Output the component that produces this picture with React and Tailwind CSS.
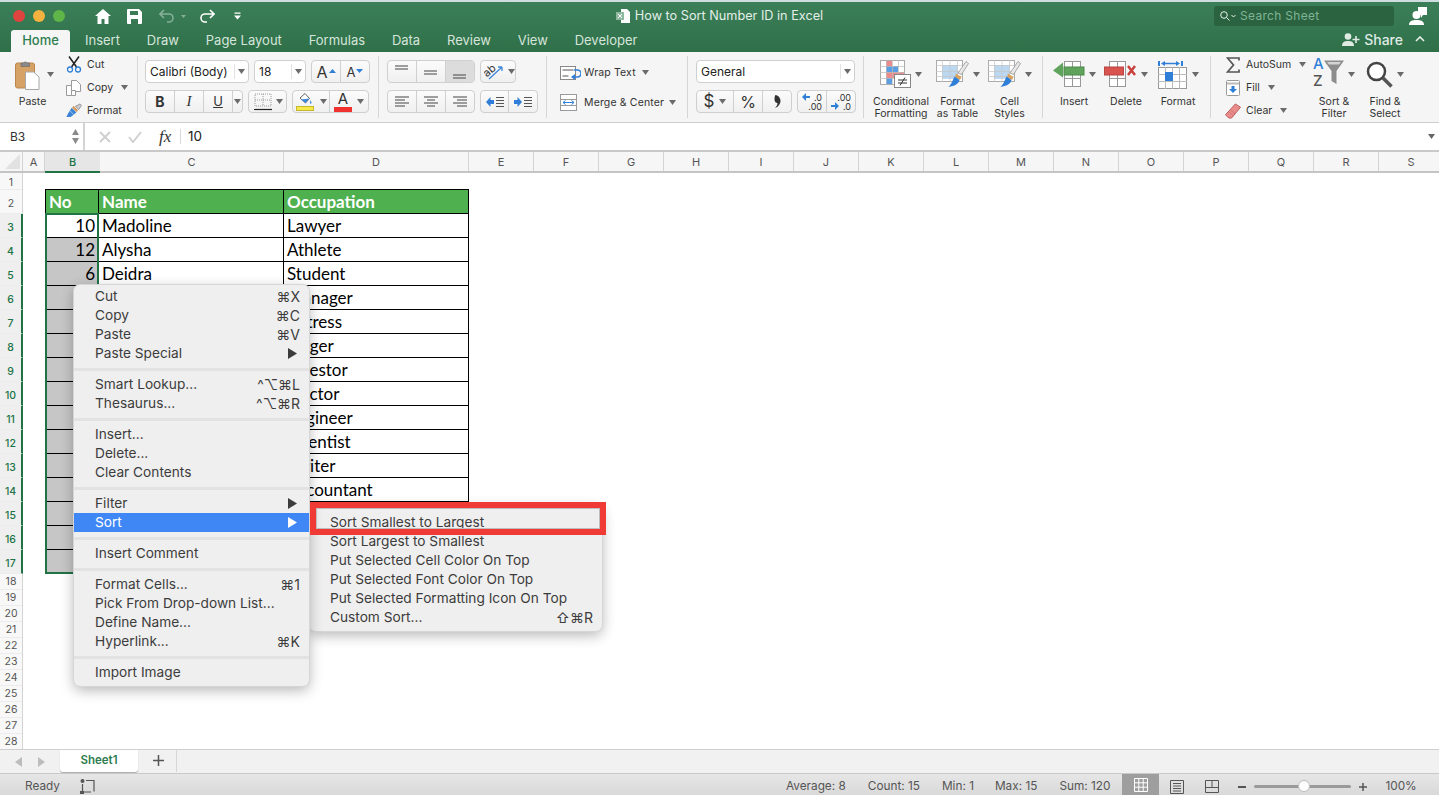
// Excel for Mac window with the cell context menu open on the Sort submenu.

const uiFont = "font-['Inter','DejaVu_Sans',sans-serif]";
const cellFont = "font-['Lato',sans-serif]";

const tabs = ["Insert", "Draw", "Page Layout", "Formulas", "Data", "Review", "View", "Developer"];

const otherColumns = ["E", "F", "G", "H", "I", "J", "K", "L", "M", "N", "O", "P", "Q", "R", "S"];

const rows = [
  ["10", "Madoline", "Lawyer"],
  ["12", "Alysha", "Athlete"],
  ["6", "Deidra", "Student"],
  ["", "", "Manager"],
  ["", "", "Actress"],
  ["", "", "Singer"],
  ["", "", "Investor"],
  ["", "", "Doctor"],
  ["", "", "Engineer"],
  ["", "", "Scientist"],
  ["", "", "Writer"],
  ["", "", "Accountant"],
  ["", "", ""],
  ["", "", ""],
  ["", "", ""],
];

const menuGroups = [
  [
    { label: "Cut", keys: "⌘X" },
    { label: "Copy", keys: "⌘C" },
    { label: "Paste", keys: "⌘V" },
    { label: "Paste Special", arrow: true },
  ],
  [
    { label: "Smart Lookup...", keys: "^⌥⌘L" },
    { label: "Thesaurus...", keys: "^⌥⌘R" },
  ],
  [{ label: "Insert..." }, { label: "Delete..." }, { label: "Clear Contents" }],
  [{ label: "Filter", arrow: true }, { label: "Sort", arrow: true, active: true }],
  [{ label: "Insert Comment" }],
  [
    { label: "Format Cells...", keys: "⌘1" },
    { label: "Pick From Drop-down List..." },
    { label: "Define Name..." },
    { label: "Hyperlink...", keys: "⌘K" },
  ],
  [{ label: "Import Image" }],
];

const sortItems = [
  { label: "Sort Smallest to Largest" },
  { label: "Sort Largest to Smallest" },
  { label: "Put Selected Cell Color On Top" },
  { label: "Put Selected Font Color On Top" },
  { label: "Put Selected Formatting Icon On Top" },
  { label: "Custom Sort...", keys: "⇧⌘R" },
];

function Caret({ className = "" }) {
  return (
    <svg width="7" height="5" viewBox="0 0 7 5" className={`shrink-0 ${className}`}>
      <path d="M0 0h7L3.500 5z" fill="#6b6b6b" />
    </svg>
  );
}

function Lines({ lines, width = 16, height = 14 }) {
  return (
    <svg width={width} height={height} viewBox={`0 0 ${width} ${height}`}>
      {lines.map(([x1, x2, y]) => (
        <path key={`${x1}-${y}`} d={`M${x1} ${y}H${x2}`} stroke="#444" strokeWidth="1" />
      ))}
    </svg>
  );
}

function PasteIcon() {
  return (
    <svg width="25" height="31" viewBox="0 0 25 31">
      <rect x="0.500" y="4" width="19" height="25" rx="2" fill="#d7a266" stroke="#b9874e" />
      <path d="M6 4h2.500a2 2 0 0 1 3.500 0H14.500v3.500H6z" fill="#8a8a8a" stroke="#666" strokeWidth="0.6" />
      <path d="M10.500 13h8l5.500 5v12.500H10.500z" fill="#fff" stroke="#a8a8a8" />
    </svg>
  );
}

function ScissorsIcon() {
  return (
    <svg width="16" height="17" viewBox="0 0 16 17">
      <path d="M3 0.500 10.500 11M13 0.500 5.500 11" stroke="#222" strokeWidth="1.500" fill="none" />
      <circle cx="4" cy="13.500" r="2.500" fill="none" stroke="#2f7fd8" strokeWidth="1.300" />
      <circle cx="12" cy="13.500" r="2.500" fill="none" stroke="#2f7fd8" strokeWidth="1.300" />
    </svg>
  );
}

function CopyIcon() {
  return (
    <svg width="16" height="16" viewBox="0 0 16 16" fill="#fff" stroke="#9a9a9a">
      <path d="M5.500 0.500h5l4 4v7h-9z" />
      <path d="M0.500 5.500h5v10h-5z" />
      <path d="M5.500 10.500h4v5h-4z" />
    </svg>
  );
}

function BrushIcon() {
  return (
    <svg width="17" height="15" viewBox="0 0 17 15">
      <path d="M10 3 15 0.500l1.500 1.500-3 4.500z" fill="#c9ccd2" stroke="#777" strokeWidth="0.700" />
      <path d="M8 2.500 13 7.500l-2 1.500-4.500-4.500z" fill="#d49a5a" />
      <path d="M6 4.500 11 9.500 5 14.500H0.500L2 11z" fill="#3d84d6" />
      <path d="M4 7.500 8 11.500" stroke="#a9cdf2" />
    </svg>
  );
}

function BorderIcon() {
  return (
    <svg width="18" height="18" viewBox="0 0 18 18">
      <path d="M1 1h16v12H1zM9 1v12M1 7h16" fill="none" stroke="#9a9a9a" strokeDasharray="1 1" />
      <path d="M0 16.500h18" stroke="#222" strokeWidth="1.200" />
    </svg>
  );
}

function FillIcon() {
  return (
    <svg width="18" height="19" viewBox="0 0 18 19">
      <path d="M4 6 9 1.500l4.500 5-4 4.500z" fill="#fff" stroke="#666" />
      <path d="M5 7.500 9.500 11l4-4.500z" fill="#3f87d8" />
      <path d="M14 8c1 1.500 1.500 2 1.500 3s-1.500 1-1.500 0z" fill="#3f87d8" />
      <rect x="0.500" y="14.500" width="17" height="4" fill="#f5ea4a" stroke="#c4b92e" />
    </svg>
  );
}

function FontColorIcon() {
  return (
    <div className="flex flex-col items-center">
      <span className="text-[15px] leading-[15px] text-[#333]">A</span>
      <span className="mt-[1px] h-[5px] w-[18px] bg-[#f0312d]" />
    </div>
  );
}

function OrientationIcon() {
  return (
    <svg width="21" height="19" viewBox="0 0 21 19">
      <text x="0" y="12" fontSize="11" fill="#333" fontFamily="Inter, sans-serif" transform="rotate(-40 6 10)">
        ab
      </text>
      <path d="M5 17 18 5M18 5h-4M18 5v4" stroke="#3f87d8" strokeWidth="1.300" fill="none" />
    </svg>
  );
}

function IndentIcon({ flip = false }) {
  return (
    <svg width="18" height="12" viewBox="0 0 18 12">
      <path d={flip ? "M0 4h3.500V1L8 6l-4.500 5V8H0z" : "M8 4H4.500V1L0 6l4.500 5V8H8z"} fill="#2f7fd8" />
      <path d="M10 1.500h8M10 4.500h8M10 7.500h8M10 10.500h8" stroke="#555" />
    </svg>
  );
}

function WrapIcon() {
  return (
    <svg width="21" height="14" viewBox="0 0 21 14">
      <rect x="0.500" y="0.500" width="15" height="13" fill="#fff" stroke="#888" />
      <path d="M2.500 4h11M2.500 10h6" stroke="#555" />
      <path d="M14 4h3.500a2.500 2.500 0 0 1 0 7H14" fill="none" stroke="#2f7fd8" strokeWidth="1.500" />
      <path d="M15 8v6l-4-3z" fill="#2f7fd8" />
    </svg>
  );
}

function MergeIcon() {
  return (
    <svg width="17" height="17" viewBox="0 0 17 17">
      <rect x="0.500" y="0.500" width="16" height="16" fill="#fff" stroke="#9a9a9a" />
      <path d="M0.500 5.500h16M0.500 11.500h16" stroke="#9a9a9a" />
      <path d="M3 8.500h11M3 8.500l2.500-2M3 8.500l2.500 2M14 8.500l-2.500-2M14 8.500l-2.500 2" stroke="#2f7fd8" fill="none" />
    </svg>
  );
}

function CommaIcon() {
  return (
    <svg width="7" height="13" viewBox="0 0 7 13">
      <path d="M1.500 0c3 .5 5 3 5 6 0 3-2.500 6-5.500 7 1.500-1.500 2.500-3 2.500-5C2 8 .5 7 .5 4.500.5 2 1 .5 1.500 0z" fill="#333" />
    </svg>
  );
}

function DecimalIcon({ more = false }) {
  return (
    <div className={`relative h-[18px] w-[20px] text-[9px] leading-[9px] text-[#333] ${uiFont}`}>
      <span className={`absolute right-0 ${more ? "top-[9px]" : "top-0"}`}>.0</span>
      <span className={`absolute right-0 ${more ? "top-0" : "top-[9px]"}`}>.00</span>
      <svg
        width="8"
        height="8"
        viewBox="0 0 8 8"
        className={`absolute left-0 ${more ? "top-[9px]" : "top-0"}`}
      >
        <path d={more ? "M0 3h4V0l4 4-4 4V5H0z" : "M8 3H4V0L0 4l4 4V5h4z"} fill="#2f7fd8" />
      </svg>
    </div>
  );
}

function ConditionalIcon() {
  return (
    <svg width="31" height="28" viewBox="0 0 31 28">
      <rect x="0.500" y="0.500" width="24" height="24" fill="#fff" stroke="#aaa" />
      <rect x="6" y="1" width="6" height="5" fill="#ec8b8b" />
      <rect x="6" y="6" width="12" height="6" fill="#5b9fe3" />
      <rect x="6" y="12" width="18" height="6" fill="#ec8b8b" />
      <rect x="6" y="18" width="6" height="6" fill="#5b9fe3" />
      <path d="M6.500 0v25M12.500 0v25M18.500 0v25M0 6.500h25M0 12.500h25M0 18.500h25" stroke="#bbb" strokeWidth="0.700" />
      <rect x="14.500" y="14.500" width="16" height="13" fill="#fff" stroke="#888" />
      <path d="M18 20h9M18 23h9M25 17.500 20 25.500" stroke="#333" fill="none" />
    </svg>
  );
}

function TableBrushIcon() {
  return (
    <svg width="33" height="28" viewBox="0 0 33 28">
      <rect x="0.500" y="0.500" width="26" height="21" fill="#fff" stroke="#aaa" />
      <rect x="6" y="5" width="16" height="14" fill="#bcd8f1" />
      <path d="M6.500 0v22M14 0v22M21.500 0v22M0 5.500h27M0 11.500h27M0 16.500h27" stroke="#c4c4c4" strokeWidth="0.700" />
      <path d="M22 13 30 1.500l2.500 2-7 11z" fill="#e8e8e8" stroke="#888" strokeWidth="0.700" />
      <path d="M20 13.500 25.500 17 24 20l-5-3z" fill="#d9a25f" />
      <path d="M18.500 16.500 23.500 20c-1 4-5 6-11 7 3-3 4-6 6-10.500z" fill="#2f7fd8" />
    </svg>
  );
}

function InsertCellsIcon() {
  return (
    <svg width="32" height="26" viewBox="0 0 32 26">
      <rect x="11.500" y="0.500" width="16" height="25" fill="#fff" stroke="#999" />
      <path d="M19.500 0v26M11 17.500h17" stroke="#999" />
      <rect x="11" y="6" width="20" height="8" fill="#5fa35d" stroke="#4a8a49" />
      <path d="M10 1.500v15L0 9.500z" fill="#5fa35d" />
    </svg>
  );
}

function DeleteCellsIcon() {
  return (
    <svg width="33" height="26" viewBox="0 0 33 26">
      <rect x="5.500" y="0.500" width="16" height="25" fill="#fff" stroke="#999" />
      <path d="M13.500 0v26M5 17.500h17" stroke="#999" />
      <rect x="0.500" y="6" width="19" height="8" fill="#d9534f" stroke="#b94440" />
      <path d="M24 5l7 9M31 5l-7 9" stroke="#c9403c" strokeWidth="2.500" />
    </svg>
  );
}

function FormatCellsIcon() {
  return (
    <svg width="30" height="29" viewBox="0 0 30 29">
      <path d="M1 1v5M24 1v5" stroke="#2f7fd8" strokeWidth="2" />
      <path d="M5 3.500h15" stroke="#2f7fd8" strokeWidth="1.500" />
      <path d="M3 3.500l4-2.500v5zM22 3.500l-4-2.500v5z" fill="#2f7fd8" />
      <rect x="0.500" y="7.500" width="28" height="21" fill="#fff" stroke="#999" />
      <path d="M7.500 7v22M14.500 7v22M21.500 7v22M0 14.500h29M0 21.500h29" stroke="#bbb" />
      <rect x="7" y="12" width="8" height="9" fill="#2f7fd8" />
    </svg>
  );
}

function SigmaIcon() {
  return (
    <svg width="14" height="16" viewBox="0 0 14 16">
      <path d="M13 3.500V1H1.500L7.500 8l-6 7H13v-2.500" fill="none" stroke="#555" strokeWidth="1.700" />
    </svg>
  );
}

function FillDownIcon() {
  return (
    <svg width="14" height="16" viewBox="0 0 14 16">
      <rect x="0.500" y="0.500" width="13" height="15" rx="1" fill="#fff" stroke="#999" />
      <path d="M1 3.500h12" stroke="#bbb" strokeWidth="2" />
      <path d="M5.500 6h3v3h2.500L7 13 3 9h2.500z" fill="#2f7fd8" />
    </svg>
  );
}

function EraserIcon() {
  return (
    <svg width="17" height="16" viewBox="0 0 17 16">
      <path d="M11 0.500 16.500 4 7 15.500H4L0.500 12z" fill="#ea8c8c" stroke="#b85b5b" />
      <path d="M4 9 9 13M6 7l5 4" stroke="#c76c6c" strokeWidth="0.700" />
    </svg>
  );
}

function SortFilterIcon() {
  return (
    <div className={`relative h-[32px] w-[31px] ${uiFont}`}>
      <span className="absolute left-0 top-[-2px] text-[15px] font-medium leading-[16px] text-[#2f7fd8]">A</span>
      <span className="absolute left-0 top-[15px] text-[15px] font-medium leading-[16px] text-[#555]">Z</span>
      <svg width="20" height="26" viewBox="0 0 20 26" className="absolute left-[11px] top-[2px]">
        <path d="M0 0.500h20L12.500 11v13L7.500 21V11z" fill="#8c8c8c" />
        <path d="M3 2h14l-2 2.500H5z" fill="#d4d4d4" />
      </svg>
    </div>
  );
}

function SearchIcon() {
  return (
    <svg width="27" height="27" viewBox="0 0 27 27">
      <circle cx="10.500" cy="10.500" r="8.500" fill="#fff" stroke="#444" strokeWidth="2.500" />
      <path d="M17 17 25.500 25.500" stroke="#555" strokeWidth="3.500" />
    </svg>
  );
}

function Segments({ widths, children, className = "" }) {
  return (
    <div
      className={`flex h-[23px] shrink-0 divide-x divide-[#d0d0d0] overflow-hidden rounded-[4px] border border-[#cfcfcf] bg-gradient-to-b from-[#fbfbfb] to-[#f0f0f0] ${className}`}
    >
      {children.map((child, index) => (
        <div key={index} style={{ width: widths[index] }} className="flex items-center justify-center">
          {child}
        </div>
      ))}
    </div>
  );
}

function Combo({ label, className = "" }) {
  return (
    <div
      className={`flex h-[23px] shrink-0 items-center rounded-[4px] border border-[#cfcfcf] bg-white pl-[4px] text-[12px] text-[#222] ${className}`}
    >
      <span className="flex-1">{label}</span>
      <span className="flex h-[15px] w-[14px] items-center justify-center border-l border-[#e2e2e2]">
        <Caret />
      </span>
    </div>
  );
}

function BigButton({ icon, lines, width, caretClass = "" }) {
  return (
    <div style={{ width }} className="flex shrink-0 flex-col items-center">
      <div className="flex h-[44px] items-center gap-[4px]">
        {icon}
        <Caret className={caretClass} />
      </div>
      <div className="text-center text-[10.500px] leading-[12px] text-[#333]">
        {lines.map((line) => (
          <div key={line}>{line}</div>
        ))}
      </div>
    </div>
  );
}

function SmallButton({ icon, label, caret = true, iconWidth = 16 }) {
  return (
    <div className="flex h-[23px] items-center text-[10.500px] text-[#333]">
      <span style={{ width: iconWidth }} className="flex shrink-0 justify-center">
        {icon}
      </span>
      <span className="ml-[5px]">{label}</span>
      {caret ? <Caret className="ml-[8px]" /> : null}
    </div>
  );
}

function Divider() {
  return <div className="my-[4px] w-px shrink-0 bg-[#d6d6d6]" />;
}

function TitleBar() {
  return (
    <div className="h-[52px] shrink-0 border-t-[2px] border-[#cfdde0] bg-gradient-to-b from-[#3b7f58] to-[#2f7049] text-white">
      <div className="grid h-[28px] grid-cols-[1fr_auto_1fr] items-center">
        <div className="flex items-center pl-[13px]">
          <span className="h-[12px] w-[12px] rounded-full bg-[#e0443e]" />
          <span className="ml-[8px] h-[12px] w-[12px] rounded-full bg-[#f5b23e]" />
          <span className="ml-[8px] h-[12px] w-[12px] rounded-full bg-[#5fb548]" />
          <svg width="16" height="15" viewBox="0 0 16 15" className="ml-[30px]">
            <path d="M8 0 0 7h2.500v8h4v-5h3v5h4V7H16z" fill="#fff" />
          </svg>
          <svg width="15" height="15" viewBox="0 0 15 15" className="ml-[16px]">
            <path d="M1 0h11l3 3v11a1 1 0 0 1-1 1H1a1 1 0 0 1-1-1V1a1 1 0 0 1 1-1zm2 2v4h8V2zm1 8v5h7v-5z" fill="#fff" fillRule="evenodd" />
          </svg>
          <svg width="16" height="14" viewBox="0 0 16 14" className="ml-[17px] opacity-40">
            <path d="M5 1 1 5l4 4M1 5h9a4 4 0 0 1 0 8H8" fill="none" stroke="#fff" strokeWidth="1.600" />
          </svg>
          <svg width="5" height="3" viewBox="0 0 5 3" className="ml-[6px] opacity-40">
            <path d="M0 0h5L2.500 3z" fill="#fff" />
          </svg>
          <svg width="16" height="14" viewBox="0 0 16 14" className="ml-[13px]">
            <path d="M11 1l4 4-4 4M15 5H6a4 4 0 0 0 0 8h2" fill="none" stroke="#fff" strokeWidth="1.600" />
          </svg>
          <svg width="7" height="8" viewBox="0 0 7 8" className="ml-[19px]">
            <path d="M0.500 0.500h6v1.200h-6zM0 3.500h7L3.500 7.500z" fill="#fff" />
          </svg>
        </div>
        <div className="flex items-center gap-[5px] text-[12.700px] text-[#e4eee8]">
          <svg width="14" height="14" viewBox="0 0 14 14">
            <path d="M5 0h6l3 3v11H5z" fill="#fff" />
            <rect x="0" y="3" width="8" height="8" fill="#8fb8a0" />
            <path d="M2 5l4 4M6 5 2 9" stroke="#fff" />
          </svg>
          How to Sort Number ID in Excel
        </div>
        <div className="flex items-center justify-end pr-[12px]">
          <div className="flex h-[20px] w-[180px] items-center rounded-[3px] bg-[#2b6340] pl-[6px] text-[12px] tracking-[0.3px] text-[#7fb596]">
            <svg width="10" height="10" viewBox="0 0 10 10">
              <circle cx="4" cy="4" r="3.300" fill="none" stroke="#e6f0ea" />
              <path d="M6.500 6.500 9.500 9.500" stroke="#e6f0ea" />
            </svg>
            <svg width="5" height="3" viewBox="0 0 5 3" className="ml-[1px]">
              <path d="M0.500 0 2.500 2 4.500 0" fill="none" stroke="#e6f0ea" />
            </svg>
            <span className="ml-[4px]">Search Sheet</span>
          </div>
          <svg width="18" height="18" viewBox="0 0 18 18" className="ml-[15px]">
            <circle cx="7.500" cy="8" r="4" fill="#fff" />
            <path d="M0 18c0-4 3-5 7.500-5s7.500 1 7.500 5z" fill="#fff" />
            <path d="M9 0h9v8h-4l-2 3v-3H9z" fill="#fff" />
          </svg>
        </div>
      </div>
      <div className="flex h-[22px] items-stretch text-[13px] text-[#d6e5db]">
        <div className="ml-[11px] flex w-[59px] items-center justify-center rounded-t-[3px] bg-[#f5f5f5] font-medium text-[#2e7d4f]">
          Home
        </div>
        <div className="ml-[15px] flex items-center gap-[26.800px]">
          {tabs.map((tab) => (
            <span key={tab}>{tab}</span>
          ))}
        </div>
        <div className="ml-auto flex items-center pb-[4px] pr-[14px] text-[14px] font-medium text-[#dfeae3]">
          <svg width="18" height="13" viewBox="0 0 18 13">
            <circle cx="6" cy="3.500" r="3.300" fill="#dfeae3" />
            <path d="M0 13c0-4 2.500-5 6-5s6 1 6 5z" fill="#dfeae3" />
            <path d="M14 3v7M10.500 6.500h7" stroke="#dfeae3" strokeWidth="1.600" />
          </svg>
          <span className="ml-[4px]">Share</span>
          <svg width="10" height="6" viewBox="0 0 10 6" className="ml-[12px]">
            <path d="M1 5l4-4 4 4" fill="none" stroke="#e8f0eb" strokeWidth="1.600" />
          </svg>
        </div>
      </div>
    </div>
  );
}

function Ribbon() {
  return (
    <div className="flex h-[71px] shrink-0 border-b border-[#cfcfcf] bg-[#f5f5f5]">
      <div className="flex w-[137px] shrink-0 pl-[14px]">
        <BigButton width={37} icon={<PasteIcon />} lines={["Paste"]} caretClass="ml-[3px] -mr-[4px]" />
        <div className="ml-[15px] pt-[1px]">
          <SmallButton icon={<ScissorsIcon />} label="Cut" caret={false} />
          <SmallButton icon={<CopyIcon />} label="Copy" />
          <SmallButton icon={<BrushIcon />} label="Format" caret={false} />
        </div>
      </div>
      <Divider />

      <div className="flex w-[240px] shrink-0 flex-col gap-[7px] pl-[7px] pt-[8px]">
        <div className="flex gap-[5px]">
          <Combo label="Calibri (Body)" className="w-[104px]" />
          <Combo label="18" className="w-[52px]" />
          <Segments widths={[29, 28]}>
            {[
              <span key="up" className="flex items-start text-[16px] leading-[18px] text-[#333]">
                A
                <svg width="7" height="4" viewBox="0 0 7 4" className="ml-[1px] mt-[6px]">
                  <path d="M3.500 0 7 4H0z" fill="#2f7fd8" />
                </svg>
              </span>,
              <span key="down" className="flex items-start text-[13px] leading-[18px] text-[#333]">
                A
                <svg width="7" height="4" viewBox="0 0 7 4" className="ml-[1px] mt-[6px]">
                  <path d="M0 0h7L3.500 4z" fill="#2f7fd8" />
                </svg>
              </span>,
            ]}
          </Segments>
        </div>
        <div className="flex gap-[5px]">
          <Segments widths={[29, 29, 29, 9]}>
            {[
              <span key="b" className="text-[14px] font-bold text-[#333]">B</span>,
              <span key="i" className="font-['Liberation_Serif',serif] text-[15px] italic text-[#333]">I</span>,
              <span key="u" className="text-[13px] text-[#333] underline">U</span>,
              <Caret key="c" />,
            ]}
          </Segments>
          <div className="flex h-[23px] w-[39px] shrink-0 items-center gap-[4px] rounded-[4px] border border-[#cfcfcf] bg-gradient-to-b from-[#fbfbfb] to-[#f0f0f0] pl-[5px]">
            <BorderIcon />
            <Caret />
          </div>
          <Segments widths={[37, 38]}>
            {[
              <span key="fill" className="flex items-center gap-[6px]">
                <FillIcon />
                <Caret />
              </span>,
              <span key="font" className="flex items-center gap-[5px]">
                <FontColorIcon />
                <Caret />
              </span>,
            ]}
          </Segments>
        </div>
      </div>
      <Divider />

      <div className="flex w-[167px] shrink-0 flex-col gap-[7px] pl-[8px] pt-[8px]">
        <div className="flex gap-[5px]">
          <Segments widths={[29, 29, 28]}>
            {[
              <Lines key="t" lines={[[1, 14, 1], [1, 14, 4]]} />,
              <Lines key="m" lines={[[1, 14, 6], [1, 14, 9]]} />,
              <div key="b" className="flex h-full w-full items-center justify-center bg-[#dcdcdc]">
                <Lines lines={[[1, 14, 10], [1, 14, 13]]} />
              </div>,
            ]}
          </Segments>
          <div className="flex h-[23px] w-[36px] shrink-0 items-center gap-[3px] rounded-[4px] border border-[#cfcfcf] bg-gradient-to-b from-[#fbfbfb] to-[#f0f0f0] pl-[3px]">
            <OrientationIcon />
            <Caret />
          </div>
        </div>
        <div className="flex gap-[5px]">
          <Segments widths={[29, 29, 28]}>
            {[
              <Lines key="l" lines={[[1, 15, 2], [1, 11, 5], [1, 15, 8], [1, 11, 11]]} />,
              <Lines key="c" lines={[[1, 15, 2], [4, 12, 5], [1, 15, 8], [4, 12, 11]]} />,
              <Lines key="r" lines={[[1, 15, 2], [5, 15, 5], [1, 15, 8], [5, 15, 11]]} />,
            ]}
          </Segments>
          <Segments widths={[28, 28]}>
            {[<IndentIcon key="out" />, <IndentIcon key="in" flip />]}
          </Segments>
        </div>
      </div>
      <Divider />

      <div className="w-[140px] shrink-0 pl-[13px] pt-[9px]">
        <div className="flex h-[23px] items-center text-[10.500px] tracking-[0.15px] text-[#333]">
          <WrapIcon />
          <span className="ml-[3px]">Wrap Text</span>
          <Caret className="ml-[6px]" />
        </div>
        <div className="mt-[7px] flex h-[23px] items-center text-[10.500px] tracking-[0.15px] text-[#333]">
          <MergeIcon />
          <span className="ml-[7px]">Merge &amp; Center</span>
          <Caret className="ml-[5px]" />
        </div>
      </div>
      <Divider />

      <div className="flex w-[175px] shrink-0 flex-col gap-[7px] pl-[8px] pt-[8px]">
        <Combo label="General" className="w-[159px]" />
        <div className="flex gap-[5px]">
          <Segments widths={[37, 29, 28]}>
            {[
              <span key="d" className="flex items-center gap-[5px] text-[17px] text-[#333]">
                $
                <Caret />
              </span>,
              <span key="p" className="text-[16px] text-[#333]">%</span>,
              <CommaIcon key="k" />,
            ]}
          </Segments>
          <Segments widths={[29, 28]}>
            {[<DecimalIcon key="less" />, <DecimalIcon key="more" more />]}
          </Segments>
        </div>
      </div>
      <Divider />

      <div className="flex w-[178px] shrink-0 pl-[4px]">
        <BigButton width={66} icon={<ConditionalIcon />} lines={["Conditional", "Formatting"]} />
        <BigButton width={47} icon={<TableBrushIcon />} lines={["Format", "as Table"]} />
        <BigButton width={57} icon={<TableBrushIcon />} lines={["Cell", "Styles"]} />
      </div>
      <Divider />

      <div className="flex w-[167px] shrink-0 pl-[9px]">
        <BigButton width={44} icon={<InsertCellsIcon />} lines={["Insert"]} />
        <BigButton width={60} icon={<DeleteCellsIcon />} lines={["Delete"]} />
        <BigButton width={44} icon={<FormatCellsIcon />} lines={["Format"]} />
      </div>
      <Divider />

      <div className="flex flex-1 pl-[14px]">
        <div className="w-[89px] shrink-0 pt-[1px]">
          <SmallButton icon={<SigmaIcon />} label="AutoSum" />
          <SmallButton icon={<FillDownIcon />} label="Fill" />
          <SmallButton icon={<EraserIcon />} label="Clear" />
        </div>
        <BigButton width={40} icon={<SortFilterIcon />} lines={["Sort &", "Filter"]} />
        <div className="w-[10px]" />
        <BigButton width={42} icon={<SearchIcon />} lines={["Find &", "Select"]} />
      </div>
    </div>
  );
}

function FormulaBar() {
  return (
    <div className="flex h-[27px] shrink-0 items-center bg-white">
      <div className="flex h-full w-[85px] shrink-0 items-center justify-between border-r-2 border-[#d4d4d4] pl-[10px] pr-[4px] text-[12px] text-[#333]">
        B3
        <svg width="7" height="15" viewBox="0 0 7 15">
          <path d="M3.500 0 7 6H0zM0 9h7l-3.500 6z" fill="#8a8a8a" />
        </svg>
      </div>
      <svg width="12" height="12" viewBox="0 0 12 12" className="ml-[14px]">
        <path d="M1 1l10 10M11 1 1 11" stroke="#d0d0d0" strokeWidth="2" />
      </svg>
      <svg width="14" height="12" viewBox="0 0 14 12" className="ml-[17px]">
        <path d="M1 6l4 5 8-10" fill="none" stroke="#d0d0d0" strokeWidth="2" />
      </svg>
      <span className="ml-[17px] w-[21px] font-['Liberation_Serif',serif] text-[17px] italic text-[#333]">fx</span>
      <span className="h-[15px] w-px bg-[#d8d8d8]" />
      <span className="ml-[7px] text-[13.500px] text-[#222]">10</span>
      <svg width="7" height="5" viewBox="0 0 7 5" className="ml-auto mr-[4px]">
        <path d="M0 0h7L3.500 5z" fill="#666" />
      </svg>
    </div>
  );
}

function ColumnHeaders() {
  return (
    <div className="flex h-[23px] shrink-0 border-y-2 border-t-[#c9c9c9] border-b-[#c4c4c4] bg-[#f6f6f6] text-[11px] leading-[21px] text-[#555]">
      <div className="flex w-[23px] shrink-0 items-end justify-end border-r border-[#d4d4d4] p-[2px]">
        <svg width="15" height="15" viewBox="0 0 15 15">
          <path d="M15 0v15H0z" fill="#e2e2e2" />
        </svg>
      </div>
      <div className="w-[22px] shrink-0 border-r border-[#d4d4d4] text-center">A</div>
      <div className="-mb-[2px] w-[55px] shrink-0 border-b-2 border-[#217346] bg-[#e6e6e6] text-center font-medium text-[#217346]">
        B
      </div>
      <div className="w-[184px] shrink-0 border-r border-[#d4d4d4] text-center">C</div>
      <div className="w-[185px] shrink-0 border-r border-[#d4d4d4] text-center">D</div>
      {otherColumns.map((column) => (
        <div key={column} className="w-[65px] shrink-0 border-r border-[#d4d4d4] text-center">
          {column}
        </div>
      ))}
    </div>
  );
}

function RowHeaders() {
  const numbers = Array.from({ length: 28 }, (_, index) => index + 1);

  return (
    <div className="w-[23px] shrink-0 border-r border-[#d4d4d4] bg-[#f8f8f8] text-center text-[10.500px] text-[#555]">
      {numbers.map((number) => {
        const selected = number >= 3 && number <= 17;
        let height = "h-[16px] pt-[1px]";
        if (number === 1) height = "h-[17px] pt-[3px]";
        else if (number <= 17) height = "h-[24px] pt-[5px]";

        return (
          <div
            key={number}
            className={`flex items-center justify-center border-b border-[#ececec] ${height} ${
              selected ? "-mr-px border-r-2 border-r-[#217346] bg-[#efefef] font-medium text-[#217346]" : ""
            }`}
          >
            {number}
          </div>
        );
      })}
    </div>
  );
}

function DataTable() {
  const cell = "flex h-[24px] items-center border-b border-r border-black px-[3px] text-[17px]";

  return (
    <div className={`relative ml-[22px] mt-[16px] h-fit w-[424px] ${cellFont}`}>
      <div className="grid grid-cols-[53px_185px_185px] border-l border-t border-black">
        <div className={`${cell} bg-[#4fb04f] font-bold text-white`}>No</div>
        <div className={`${cell} bg-[#4fb04f] font-bold text-white`}>Name</div>
        <div className={`${cell} bg-[#4fb04f] font-bold text-white`}>Occupation</div>
        {rows.map(([number, name, job], index) => (
          <div key={index} className="contents">
            <div className={`${cell} justify-end ${index === 0 ? "" : "bg-[#c6c6c6]"}`}>{number}</div>
            <div className={cell}>{name}</div>
            <div className={cell}>{job}</div>
          </div>
        ))}
      </div>
      {/* selected range outline */}
      <div className="absolute left-0 top-[24px] h-[361px] w-[54px] border-2 border-[#217346]" />
    </div>
  );
}

function MenuRow({ item, pad = "pl-[21px] pr-[9px]" }) {
  return (
    <div
      className={`flex h-[19px] items-center justify-between ${pad} ${
        item.active ? "bg-[#3f87f5] text-white" : "text-[#3c3c3c]"
      }`}
    >
      <span>{item.label}</span>
      {item.keys ? <span className="text-[14px]">{item.keys}</span> : null}
      {item.arrow ? (
        <svg width="9" height="11" viewBox="0 0 9 11" className="mr-[3px]">
          <path d="M0 0l9 5.500-9 5.500z" fill={item.active ? "#fff" : "#3c3c3c"} />
        </svg>
      ) : null}
    </div>
  );
}

function ContextMenu() {
  return (
    <div
      className={`absolute left-[74px] top-[285px] z-20 w-[235px] rounded-[6px] bg-[#efefef] pb-[4px] pt-[2px] text-[13.700px] shadow-[0_4px_14px_rgba(0,0,0,0.3)] ring-1 ring-[#d6d6d6] ${uiFont}`}
    >
      {menuGroups.map((group, index) => (
        <div key={index}>
          {index > 0 ? (
            <div className="flex h-[12px] items-center">
              <div className="h-[3px] w-full bg-[#e2e2e2]" />
            </div>
          ) : null}
          {group.map((item) => (
            <MenuRow key={item.label} item={item} />
          ))}
        </div>
      ))}
    </div>
  );
}

function SortSubmenu() {
  return (
    <div
      className={`absolute left-[309px] top-[505px] z-10 w-[293px] rounded-[6px] bg-[#efefef] pb-[4px] pt-[8px] text-[13.700px] shadow-[0_4px_14px_rgba(0,0,0,0.3)] ring-1 ring-[#d6d6d6] ${uiFont}`}
    >
      {sortItems.map((item) => (
        <MenuRow key={item.label} item={item} />
      ))}
    </div>
  );
}

function SheetTabs() {
  return (
    <div className="flex h-[24px] shrink-0 border-t border-[#cfcfcf] bg-[#f1f1f1]">
      <svg width="7" height="10" viewBox="0 0 7 10" className="ml-[15px] mt-[7px]">
        <path d="M7 0v10L0 5z" fill="#bdbdbd" />
      </svg>
      <svg width="7" height="10" viewBox="0 0 7 10" className="ml-[16px] mt-[7px]">
        <path d="M0 0v10l7-5z" fill="#bdbdbd" />
      </svg>
      <div className="ml-[15px] flex h-[22px] w-[78px] items-center justify-center rounded-b-[3px] bg-white text-[11.500px] font-semibold text-[#2e7d4f] shadow-[0_1px_1px_rgba(0,0,0,0.3)]">
        Sheet1
      </div>
      <svg width="11" height="11" viewBox="0 0 11 11" className="ml-[15px] mt-[5px]">
        <path d="M5.500 0v11M0 5.500h11" stroke="#555" strokeWidth="1.500" />
      </svg>
      <div className="ml-[12px] h-[22px] w-px bg-[#d6d6d6]" />
    </div>
  );
}

function StatusBar() {
  return (
    <div className="flex h-[22px] shrink-0 items-center border-t border-[#c9c9c9] bg-gradient-to-b from-[#e6e6e6] to-[#d9d9d9] pt-[4px] text-[11.800px] text-[#555]">
      <span className="ml-[25px]">Ready</span>
      <svg width="15" height="15" viewBox="0 0 15 15" className="ml-[20px]">
        <circle cx="2.500" cy="2" r="2" fill="#555" />
        <path d="M2.500 5v8H11M6 1.500h8v11" fill="none" stroke="#555" strokeWidth="1.200" />
        <rect x="0" y="12" width="4" height="3" fill="#555" />
      </svg>
      <span className="ml-[691px]">Average: 8</span>
      <span className="ml-[22px]">Count: 15</span>
      <span className="ml-[22px]">Min: 1</span>
      <span className="ml-[21px]">Max: 15</span>
      <span className="ml-[22px]">Sum: 120</span>
      <div className="-mt-[4px] ml-[12px] flex h-[21px] w-[37px] items-center justify-center self-start bg-[#9e9e9e]">
        <svg width="14" height="14" viewBox="0 0 14 14">
          <path d="M0.500 0.500h13v13h-13zM4.800 0.500v13M9.200 0.500v13M0.500 4.800h13M0.500 9.200h13" fill="none" stroke="#fff" />
        </svg>
      </div>
      <svg width="14" height="14" viewBox="0 0 14 14" className="ml-[11px]">
        <path d="M0.500 0.500h13v13h-13zM3 3.500h8M3 6h8M3 8.500h8M3 11h8" fill="none" stroke="#555" />
      </svg>
      <svg width="14" height="13" viewBox="0 0 14 13" className="ml-[21px]">
        <path d="M0.500 0.500h13v12h-13zM7 0.500v7M0.500 7.500h13" fill="none" stroke="#555" />
      </svg>
      <span className="ml-[19px] h-[2px] w-[8px] bg-[#555]" />
      <div className="relative ml-[8px] h-[3px] w-[97px] rounded-full bg-[#9a9a9a]">
        <span className="absolute left-[44px] top-[-5px] h-[12px] w-[12px] rounded-full border border-[#bdbdbd] bg-white" />
      </div>
      <svg width="8" height="8" viewBox="0 0 8 8" className="ml-[8px]">
        <path d="M4 0v8M0 4h8" stroke="#555" strokeWidth="1.500" />
      </svg>
      <span className="ml-[18px]">100%</span>
    </div>
  );
}

export default function App() {
  return (
    <div className={`relative flex h-[795px] w-[1439px] flex-col overflow-hidden bg-white ${uiFont}`}>
      <TitleBar />
      <Ribbon />
      <FormulaBar />
      <ColumnHeaders />
      <div className="flex min-h-0 flex-1 overflow-hidden">
        <RowHeaders />
        <DataTable />
      </div>
      <SheetTabs />
      <StatusBar />

      <ContextMenu />
      <SortSubmenu />
      {/* red callout drawn over the first submenu row */}
      <div className="absolute left-[310px] top-[502px] z-30 h-[33px] w-[296px] border-[6px] border-[#f03a35] shadow-[inset_0_0_0_1px_#bdbdbd]" />
    </div>
  );
}
